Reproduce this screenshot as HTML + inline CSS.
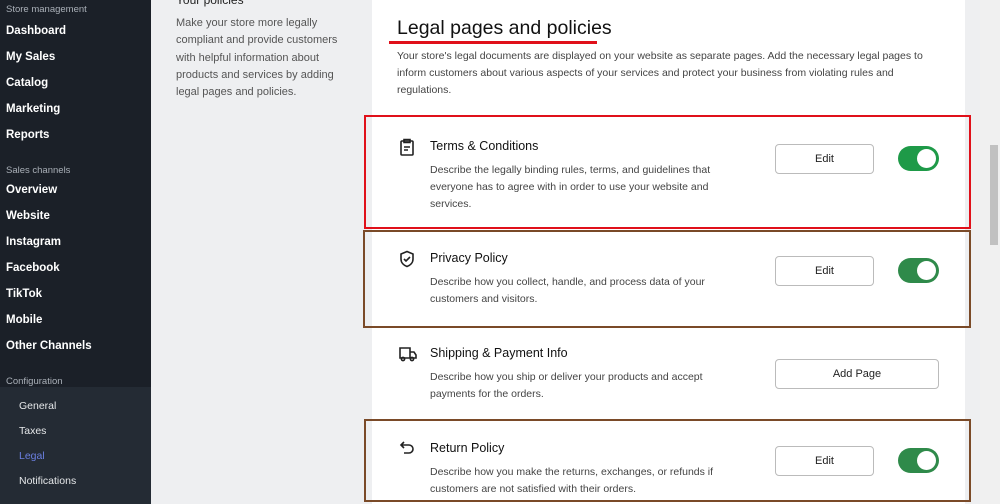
<!DOCTYPE html>
<html><head><style>
*{margin:0;padding:0;box-sizing:border-box}
body{width:1000px;height:504px;overflow:hidden;background:#eeeff1;font-family:"Liberation Sans",sans-serif;position:relative}
.sb{position:absolute;left:0;top:0;width:151px;height:504px;background:#1b2028}
.sb div{position:absolute;left:6px;color:#fff;font-weight:bold;font-size:11.5px}
.sb .h{color:#aab0b8;font-weight:normal;font-size:9.5px}
.sub{position:absolute;left:0;top:387px;width:151px;height:117px;background:#242b34}
.sb .s{left:19px;font-weight:normal;font-size:10.5px;color:#e6e8ea}
.lt{position:absolute;left:176px;color:#555;font-size:11px;line-height:17.3px;width:178px}
.card{position:absolute;left:372px;top:0;width:593px;height:504px;background:#fff}
.a{position:absolute}
.t{position:absolute;left:430px;font-size:12.5px;color:#111}
.d{position:absolute;left:430px;font-size:10.5px;color:#444;line-height:17px;width:295px}
.btn{position:absolute;left:775px;width:99px;height:30px;border:1px solid #bbb;border-radius:4px;font-size:11px;text-align:center;line-height:28px;color:#222}
.tg{position:absolute;left:898px;width:41px;height:25px;border-radius:13px;background:#1e9a48}
.tg::after{content:"";position:absolute;right:3px;top:3px;width:19px;height:19px;border-radius:50%;background:#fff}
.box{position:absolute;border:2px solid}
.ic{position:absolute;left:399px}
</style></head><body>
<div class="sb">
<div class="h" style="top:4px">Store management</div>
<div style="top:25px">Dashboard</div>
<div style="top:51px">My Sales</div>
<div style="top:77px">Catalog</div>
<div style="top:103px">Marketing</div>
<div style="top:129px">Reports</div>
<div class="h" style="top:165px">Sales channels</div>
<div style="top:184px">Overview</div>
<div style="top:210px">Website</div>
<div style="top:236px">Instagram</div>
<div style="top:262px">Facebook</div>
<div style="top:288px">TikTok</div>
<div style="top:314px">Mobile</div>
<div style="top:340px">Other Channels</div>
<div class="h" style="top:376px">Configuration</div>
</div>
<div class="sub"></div>
<div class="sb" style="background:none">
<div class="s" style="top:400px">General</div>
<div class="s" style="top:425px">Taxes</div>
<div class="s" style="top:450px;color:#6b7fe0">Legal</div>
<div class="s" style="top:475px">Notifications</div>
</div>
<div class="lt" style="top:-8px;font-size:12px;color:#222">Your policies</div>
<div class="lt" style="top:15px">Make your store more legally compliant and provide customers with helpful information about products and services by adding legal pages and policies.</div>
<div class="card"></div>
<div class="a" style="left:980px;top:0;width:20px;height:504px;background:#f0f0f0"></div>
<div class="a" style="left:990px;top:145px;width:8px;height:100px;background:#c1c1c1"></div>
<div class="a" style="left:397px;top:17px;font-size:19.5px;color:#111">Legal pages and policies</div>
<div class="a" style="left:389px;top:41px;width:208px;height:3px;background:#e0101a"></div>
<div class="d" style="left:397px;top:48px;width:545px;font-size:10.5px">Your store's legal documents are displayed on your website as separate pages. Add the necessary legal pages to inform customers about various aspects of your services and protect your business from violating rules and regulations.</div>

<div class="box" style="left:364px;top:115px;width:607px;height:114px;border-color:#e0101a"></div>
<svg class="ic" style="top:138px" width="16" height="18" viewBox="0 0 16 18" fill="none" stroke="#222" stroke-width="1.6"><rect x="2" y="3" width="12" height="14" rx="1"/><path d="M5 1.5h6v3H5zM5 9h6M5 12h4"/></svg>
<div class="t" style="top:139px">Terms &amp; Conditions</div>
<div class="d" style="top:162px">Describe the legally binding rules, terms, and guidelines that everyone has to agree with in order to use your website and services.</div>
<div class="btn" style="top:144px">Edit</div>
<div class="tg" style="top:146px"></div>

<div class="box" style="left:363px;top:230px;width:608px;height:98px;border-color:#7a4a28"></div>
<svg class="ic" style="top:250px" width="16" height="18" viewBox="0 0 16 18" fill="none" stroke="#222" stroke-width="1.6"><path d="M8 1.5l6 2.5v5c0 4-3 6.5-6 7.5-3-1-6-3.5-6-7.5V4z"/><path d="M5 9l2 2 4-4"/></svg>
<div class="t" style="top:251px">Privacy Policy</div>
<div class="d" style="top:274px">Describe how you collect, handle, and process data of your customers and visitors.</div>
<div class="btn" style="top:256px">Edit</div>
<div class="tg" style="top:258px;background:#2f8a4a"></div>

<svg class="ic" style="top:346px" width="18" height="16" viewBox="0 0 18 16" fill="none" stroke="#222" stroke-width="1.6"><path d="M1 2h10v10H1zM11 6h4l2 3v3h-6"/><circle cx="4" cy="13" r="1.6"/><circle cx="13" cy="13" r="1.6"/></svg>
<div class="t" style="top:346px">Shipping &amp; Payment Info</div>
<div class="d" style="top:369px">Describe how you ship or deliver your products and accept payments for the orders.</div>
<div class="btn" style="top:359px;width:164px">Add Page</div>

<div class="box" style="left:364px;top:419px;width:607px;height:83px;border-color:#7a4a28"></div>
<svg class="ic" style="top:441px" width="16" height="14" viewBox="0 0 16 14" fill="none" stroke="#222" stroke-width="1.6"><path d="M5 1L2 4l3 3M2 4h8a4 4 0 010 8H5"/></svg>
<div class="t" style="top:441px">Return Policy</div>
<div class="d" style="top:464px">Describe how you make the returns, exchanges, or refunds if customers are not satisfied with their orders.</div>
<div class="btn" style="top:446px">Edit</div>
<div class="tg" style="top:448px;background:#2f8a4a"></div>
</body></html>
